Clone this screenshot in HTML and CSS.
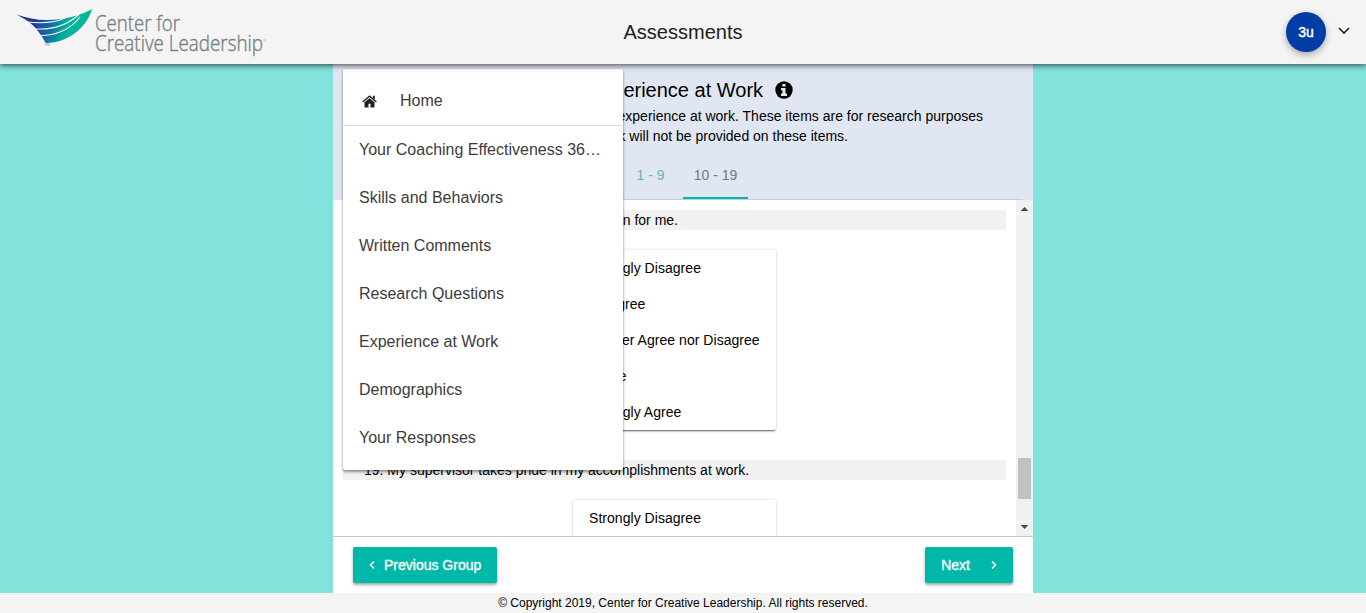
FILE: index.html
```html
<!DOCTYPE html>
<html lang="en">
<head>
<meta charset="utf-8">
<title>Assessments</title>
<link rel="stylesheet" href="styles.css">
</head>
<body>
<header class="topbar">
  <svg class="logo" width="270" height="64" viewBox="0 0 270 64" role="img" aria-label="Center for Creative Leadership">
    <defs><linearGradient id="wing" gradientUnits="userSpaceOnUse" x1="32" y1="25" x2="70" y2="35"><stop offset="0" stop-color="#28348f"/><stop offset=".45" stop-color="#146ba5"/><stop offset=".8" stop-color="#00a99d"/><stop offset="1" stop-color="#05b59c"/></linearGradient></defs>
    <path fill="url(#wing)" d="M16.500 14.500C29 19 42 21 57 19.500C71 18 82 14.500 92 9C88 25 70 43 46 43C44 41 43 37 40 34C36 27 29 21 16.500 14.500Z"/>
    <path class="logo-gap" d="M25 21.800C40 23.500 55 23 65 18M31 28.500C48 30.500 64 28 79 14.500M38 35.500C56 36 71 29 80 17"/>
    <text x="44" y="46" class="logo-tm">TM</text>
    <text x="95" y="30.500" textLength="85" lengthAdjust="spacingAndGlyphs" class="logo-text">Center for</text>
    <text x="95" y="50.500" textLength="168" lengthAdjust="spacingAndGlyphs" class="logo-text">Creative Leadership</text>
    <text x="263" y="42" class="logo-tm">®</text>
  </svg>
  <h1 class="topbar-title">Assessments</h1>
  <div class="account">
    <span class="avatar">3u</span>
    <svg width="12" height="10" viewBox="0 0 12 10"><path d="M1 1l5 5 5-5" fill="none" stroke="#222" stroke-width="1.600"/></svg>
  </div>
</header>
<main class="page">
  <section class="panel">
    <div class="intro">
      <h2 class="intro-title">Experience at Work
        <svg width="18" height="18" viewBox="0 0 18 18"><circle cx="9" cy="9" r="8.700"/><path fill="#e0e7f3" d="M7.300 3h3.200v2.500H7.300zM6 7h4.500v5.500H12V15H6v-2.500h1.400V9.200H6z"/></svg>
      </h2>
      <p class="intro-text"><span class="intro-line">Please tell us more on your overall experience at work. These items are for research purposes</span><span class="intro-line intro-line-short">only, so feedback will not be provided on these items.</span></p>
      <nav class="tabs"><span class="tab">1 - 9</span><span class="tab tab-active">10 - 19</span></nav>
    </div>
    <div class="viewport">
      <div class="questions">
        <div class="question"><span class="question-short">18. My supervisor shows concern for me.</span></div>
        <ul class="answers"><li>Strongly Disagree</li><li>Disagree</li><li>Neither Agree nor Disagree</li><li>Agree</li><li>Strongly Agree</li></ul>
        <div class="question">19. My supervisor takes pride in my accomplishments at work.</div>
        <ul class="answers answers-next"><li>Strongly Disagree</li></ul>
      </div>
      <div class="scrollbar">
        <svg width="17" height="17" viewBox="0 0 17 17"><path d="M4.500 11h8L8.500 7z" fill="#505050"/></svg>
        <span class="thumb"></span>
        <svg width="17" height="17" viewBox="0 0 17 17"><path d="M4.500 6h8L8.500 10z" fill="#505050"/></svg>
      </div>
    </div>
    <div class="actions">
      <button class="btn"><svg width="6" height="10" viewBox="0 0 6 10"><path d="M5 1.500L1.500 5 5 8.500"/></svg><span class="prev-label">Previous Group</span></button>
      <button class="btn"><span class="next-label">Next</span><svg width="6" height="10" viewBox="0 0 6 10"><path d="M1 1.500L4.500 5 1 8.500"/></svg></button>
    </div>
    <nav class="menu">
      <a class="menu-item menu-home"><svg width="15" height="13" viewBox="0 0 15 13"><path fill="#222" d="M7.500 3.200L2.500 7.300V12.500h4V8.800h2v3.700h4V7.300z"/><path fill="none" stroke="#222" stroke-width="1.300" d="M.6 7L7.500 1.200 14.400 7"/><path fill="#222" d="M10.800.8h2v4l-2-1.600z"/></svg>Home</a>
      <a class="menu-item">Your Coaching Effectiveness 36…</a>
      <a class="menu-item">Skills and Behaviors</a>
      <a class="menu-item">Written Comments</a>
      <a class="menu-item">Research Questions</a>
      <a class="menu-item">Experience at Work</a>
      <a class="menu-item">Demographics</a>
      <a class="menu-item">Your Responses</a>
    </nav>
  </section>
</main>
<footer class="footer">© Copyright 2019, Center for Creative Leadership. All rights reserved.</footer>
</body>
</html>
```
FILE: styles.css
```css
* { box-sizing: border-box; }
body { margin: 0; height: 613px; overflow: hidden; display: flex; flex-direction: column; background: #82e2dc; color: #000; font: 14px/20px "Liberation Sans", Arial, sans-serif; }
h1, h2, p, ul { margin: 0; padding: 0; font-weight: 400; }
svg { display: block; flex: none; }
.topbar { height: 64px; flex: none; display: grid; grid-template-columns: 1fr auto 1fr; align-items: center; background: #f4f4f4; box-shadow: 0 1px 6px rgba(0,0,0,.75); z-index: 2; }
.topbar-title { font-size: 20px; line-height: 24px; color: #212121; }
.logo-text { font: 300 22px "Open Sans", sans-serif; fill: #788183; stroke: #788183; stroke-width: .4px; }
.logo-tm { font: 4px "Liberation Sans", sans-serif; fill: #888; }
.logo-gap { fill: none; stroke: #f4f4f4; stroke-width: 1.1; }
.account { justify-self: end; display: flex; align-items: center; gap: 12px; padding-right: 16px; }
.avatar { width: 40px; height: 40px; border-radius: 50%; background: #003da6; color: #fff; font: 14px/40px "Liberation Sans", Arial, sans-serif; -webkit-text-stroke: .45px #fff; text-align: center; box-shadow: 0 3px 7px rgba(0,0,0,.3); }
.page { height: 529px; flex: none; display: flex; justify-content: center; }
.panel { width: 700px; position: relative; display: flex; flex-direction: column; background: #fff; }
.intro { height: 136px; flex: none; background: #e0e7f3; display: flex; flex-direction: column; align-items: center; }
.intro-title { display: flex; align-items: center; gap: 12px; font-size: 20px; line-height: 24px; padding-top: 14px; margin-left: 16px; }
.intro-text { width: 600px; padding-top: 4px; white-space: nowrap; }
.intro-line { display: block; text-align: right; }
.intro-line-short { padding-right: 135px; }
.tabs { width: 680px; height: 49px; display: flex; justify-content: center; margin-top: 5px; border-bottom: 1px solid #c3cddd; }
.tab { width: 65px; height: 48px; line-height: 49px; text-align: center; color: #5fb9b2; }
.tab-active { color: #757780; border-bottom: 2px solid #00b8a9; }
.viewport { height: 337px; flex: none; display: flex; overflow: hidden; border-bottom: 1px solid #ccc; }
.questions { width: 683px; padding: 10px 10px 0; }
.question { height: 20px; padding-left: 21px; background: #f1f1f1; }
.question-short { display: block; width: 314px; text-align: right; white-space: nowrap; }
.answers { list-style: none; width: 203px; margin: 20px auto 30px 230px; background: #fff; border-radius: 2px; box-shadow: 0 2px 2px -1px rgba(0,0,0,.6), 0 0 3px rgba(0,0,0,.18); }
.answers-next { min-height: 180px; }
.answers li { height: 36px; padding-left: 16px; line-height: 36px; letter-spacing: .04px; white-space: nowrap; }
.scrollbar { width: 17px; background: #f1f1f1; display: flex; flex-direction: column; }
.thumb { width: 13px; height: 41px; background: #c1c1c1; margin: auto 2px 20px; }
.actions { height: 56px; display: flex; align-items: center; justify-content: space-between; padding: 0 20px; }
.btn { height: 36px; padding: 0 16px; display: flex; align-items: center; border: 0; border-radius: 2px; background: #00b8a9; color: #fff; font: 14px "Liberation Sans", Arial, sans-serif; -webkit-text-stroke: .35px #fff; box-shadow: 0 2px 3px rgba(0,0,0,.35); }
.btn path { fill: none; stroke: #fff; stroke-width: 1.6; }
.prev-label { margin-left: 9px; }
.next-label { margin-right: 21px; }
.menu { position: absolute; top: 5px; left: 10px; width: 280px; height: 401px; padding-top: 8px; background: #fff; border-radius: 2px; box-shadow: 0 2px 3px rgba(0,0,0,.4), 0 0 2px rgba(0,0,0,.15); }
.menu-item { height: 48px; padding: 0 16px; display: flex; align-items: center; font-size: 16px; color: #3c3c3c; white-space: nowrap; }
.menu-home { height: 49px; padding-left: 19px; gap: 23px; border-bottom: 1px solid #ddd; }
.footer { height: 20px; background: #f4f4f4; text-align: center; font-size: 12px; }
```
